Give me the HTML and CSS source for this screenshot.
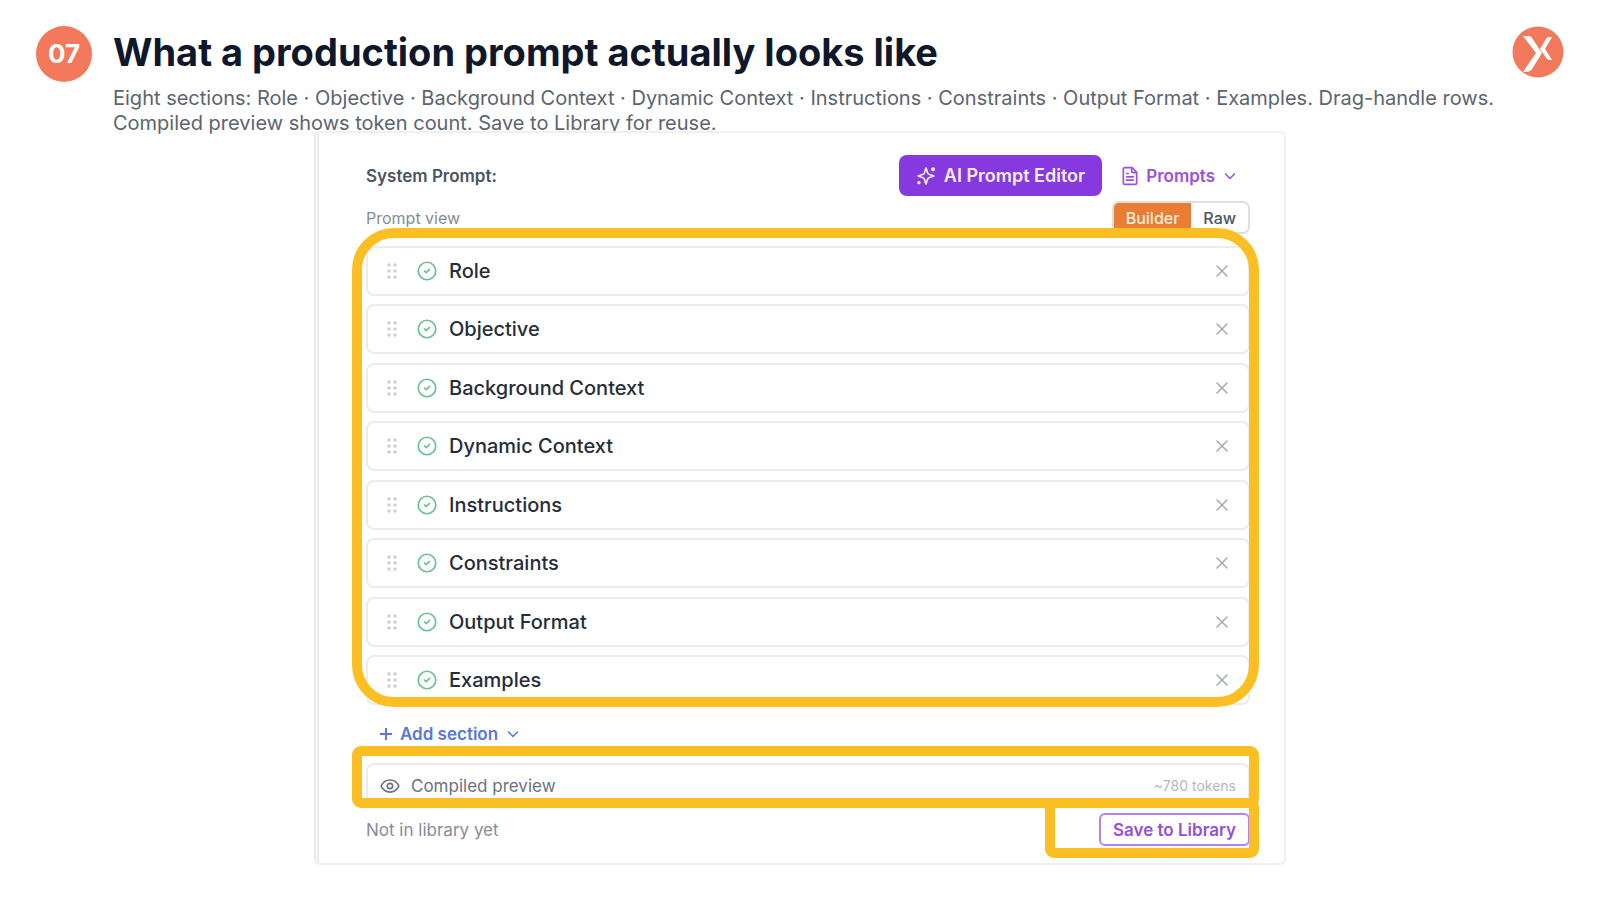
FILE: index.html
```
<!DOCTYPE html>
<html lang="en">
<head>
  <meta charset="UTF-8">
  <title>What a production prompt actually looks like</title>
  <link rel="stylesheet" href="styles.css">
</head>
<body>

<svg class="defs" width="0" height="0" aria-hidden="true">
  <symbol id="grip" viewBox="0 0 10 18">
    <g fill="currentColor">
      <circle cx="2" cy="3" r="1.8"/><circle cx="8" cy="3" r="1.8"/>
      <circle cx="2" cy="9" r="1.8"/><circle cx="8" cy="9" r="1.8"/>
      <circle cx="2" cy="15" r="1.8"/><circle cx="8" cy="15" r="1.8"/>
    </g>
  </symbol>
  <symbol id="check" viewBox="0 0 24 24">
    <circle cx="12" cy="12" r="10.5"/><path d="m9 12 2 2 4-4"/>
  </symbol>
  <symbol id="close" viewBox="0 0 12 12"><path d="M1 1l10 10M11 1L1 11"/></symbol>
  <symbol id="chevron" viewBox="0 0 12 12"><path d="M1.500 4l4.500 4.500L10.500 4"/></symbol>
</svg>

<header class="header">
  <span class="number">07</span>
  <div class="heading">
    <h1>What a production prompt actually looks like</h1>
    <p>Eight sections: Role · Objective · Background Context · Dynamic Context · Instructions · Constraints · Output Format · Examples. Drag-handle rows. Compiled preview shows token count. Save to Library for reuse.</p>
  </div>
  <svg class="logo" viewBox="0 0 52 52" aria-label="Logo">
    <circle cx="26" cy="26" r="25.500" fill="#f2795b"/>
    <path d="M11 10h5q3 0 4 2l10 15-10 16q-2 3-5 3h-4l13-19z" fill="#fff"/>
    <path d="M40 11h-3q-2 0-3 2l-6 10 7 10q1 1 3 1h2l-7-11z" fill="#fff"/>
  </svg>
</header>

<main class="panel">
  <div class="bar bar-top">
    <h2>System Prompt:</h2>
    <div class="actions">
      <button class="btn-editor">
        <svg class="icon" viewBox="0 0 24 24"><path d="M12 2.500l2 6q.4 1.100 1.500 1.500l6 2-6 2q-1.100.4-1.500 1.500l-2 6-2-6q-.4-1.100-1.500-1.500l-6-2 6-2q1.100-.4 1.500-1.500z"/><circle cx="20.500" cy="4" r="1.500"/><circle cx="3.500" cy="20" r="1"/></svg>
        AI Prompt Editor
      </button>
      <button class="btn-prompts">
        <svg class="icon" viewBox="0 0 24 24"><path d="M14.500 2H6a2 2 0 0 0-2 2v16a2 2 0 0 0 2 2h12a2 2 0 0 0 2-2V7.500zM14 2v4a2 2 0 0 0 2 2h4M10 9H8M16 13H8M16 17H8"/></svg>
        Prompts
        <svg class="chevron"><use href="#chevron"/></svg>
      </button>
    </div>
  </div>

  <div class="bar bar-view">
    <span>Prompt view</span>
    <div class="toggle">
      <button class="active">Builder</button>
      <button>Raw</button>
    </div>
  </div>

  <div class="marked marked-sections">
    <ul class="sections">
      <li><svg class="grip"><use href="#grip"/></svg><svg class="check"><use href="#check"/></svg>Role<button class="close" aria-label="Remove Role"><svg><use href="#close"/></svg></button></li>
      <li><svg class="grip"><use href="#grip"/></svg><svg class="check"><use href="#check"/></svg>Objective<button class="close" aria-label="Remove Objective"><svg><use href="#close"/></svg></button></li>
      <li><svg class="grip"><use href="#grip"/></svg><svg class="check"><use href="#check"/></svg>Background Context<button class="close" aria-label="Remove Background Context"><svg><use href="#close"/></svg></button></li>
      <li><svg class="grip"><use href="#grip"/></svg><svg class="check"><use href="#check"/></svg>Dynamic Context<button class="close" aria-label="Remove Dynamic Context"><svg><use href="#close"/></svg></button></li>
      <li><svg class="grip"><use href="#grip"/></svg><svg class="check"><use href="#check"/></svg>Instructions<button class="close" aria-label="Remove Instructions"><svg><use href="#close"/></svg></button></li>
      <li><svg class="grip"><use href="#grip"/></svg><svg class="check"><use href="#check"/></svg>Constraints<button class="close" aria-label="Remove Constraints"><svg><use href="#close"/></svg></button></li>
      <li><svg class="grip"><use href="#grip"/></svg><svg class="check"><use href="#check"/></svg>Output Format<button class="close" aria-label="Remove Output Format"><svg><use href="#close"/></svg></button></li>
      <li><svg class="grip"><use href="#grip"/></svg><svg class="check"><use href="#check"/></svg>Examples<button class="close" aria-label="Remove Examples"><svg><use href="#close"/></svg></button></li>
    </ul>
  </div>

  <button class="btn-add">
    <svg class="plus" viewBox="0 0 12 12"><path d="M6 0v12M0 6h12"/></svg>
    Add section
    <svg class="chevron"><use href="#chevron"/></svg>
  </button>

  <div class="marked marked-preview">
    <div class="preview">
      <svg class="icon" viewBox="0 0 24 24"><path d="M1.500 12.500a1 1 0 0 1 0-1C6 2.500 18 2.500 22.500 11.500a1 1 0 0 1 0 1C18 21.500 6 21.500 1.500 12.500z"/><circle cx="12" cy="12" r="3.200"/></svg>
      <span>Compiled preview</span>
      <small>~780 tokens</small>
    </div>
  </div>

  <div class="bar bar-library">
    <span>Not in library yet</span>
    <div class="marked marked-save">
      <button class="btn-save">Save to Library</button>
    </div>
  </div>
</main>

</body>
</html>
```
FILE: styles.css
```
* {
  box-sizing: border-box;
}
body {
  margin: 0;
  font-family: Inter, "Liberation Sans", sans-serif;
  background-color: #fff;
  color: #252d3a;
}
h1, h2, p, ul {
  margin: 0;
  padding: 0;
}
button {
  font: inherit;
  color: inherit;
  background: none;
  border: 0;
  padding: 0;
  display: flex;
  align-items: center;
}
svg {
  flex: none;
  fill: none;
  stroke: currentColor;
  stroke-width: 2;
  stroke-linecap: round;
  stroke-linejoin: round;
}
.defs {
  position: absolute;
}
.header {
  display: flex;
  align-items: flex-start;
  padding: 26px 36px 0;
}
.number {
  flex: none;
  width: 56px;
  height: 56px;
  border-radius: 50%;
  background-color: #f2795b;
  color: #fff;
  font-size: 26px;
  font-weight: 700;
  line-height: 56px;
  text-align: center;
}
.heading {
  flex: 1;
  margin-left: 21px;
}
h1 {
  font-size: 38px;
  line-height: 52px;
  font-weight: 700;
  color: #0f172a;
}
.heading p {
  margin-top: 8px;
  font-size: 20px;
  line-height: 25px;
  color: #5b6472;
}
.logo {
  width: 52px;
  height: 52px;
  stroke: none;
}
.panel {
  position: relative;
  margin: -5px 314px 0;
  padding: 22px 34px 17px 47px;
  background-color: #fff;
  border: 2px solid #f0f0f2;
  border-left: 5px double #e9eaec;
  border-radius: 6px;
}
.bar {
  display: flex;
  align-items: center;
  justify-content: space-between;
}
h2 {
  font-size: 17px;
  font-weight: 600;
  color: #4b5563;
}
.actions {
  display: flex;
  gap: 18px;
  padding-right: 14px;
  font-weight: 600;
}
.icon {
  width: 20px;
  height: 20px;
}
.btn-editor {
  height: 41px;
  padding: 0 17px;
  gap: 8px;
  border-radius: 8px;
  background-color: #8639df;
  font-size: 18px;
  color: #f5edff;
}
.btn-prompts {
  gap: 6px;
  font-size: 17px;
  color: #9a50e6;
}
.chevron {
  width: 12px;
  height: 12px;
  margin-left: 3px;
  stroke-width: 1.5;
}
.bar-view {
  margin-top: 5px;
  font-size: 16px;
  color: #868c98;
}
.toggle {
  display: flex;
  height: 33px;
  border: 2px solid #dcdee3;
  border-radius: 7px;
  overflow: hidden;
  font-weight: 500;
  color: #4b5563;
}
.toggle button {
  padding: 0 12px;
}
.toggle .active {
  background-color: #e87d33;
  color: #ffeede;
}
/* yellow callout frames drawn over the panel */
.marked {
  position: relative;
}
.marked::after {
  content: "";
  position: absolute;
  border: 10px solid #fbbf24;
  border-radius: 9px;
  pointer-events: none;
}
.marked-sections {
  margin-top: 12px;
}
.marked-sections::after {
  inset: -18px -9px -2px -14px;
  border-radius: 42px;
}
.sections {
  min-height: 459px;
  display: flex;
  flex-direction: column;
  justify-content: space-between;
  list-style: none;
}
.sections li {
  display: flex;
  align-items: center;
  height: 50px;
  padding: 0 20px 0 19px;
  border: 2px solid #ececef;
  border-radius: 8px;
  font-size: 20px;
  font-weight: 500;
}
.grip {
  width: 10px;
  height: 18px;
  color: #cdd0d5;
  stroke: none;
}
.check {
  width: 20px;
  height: 20px;
  margin: 0 12px 0 20px;
  color: #6cc092;
}
.close {
  margin-left: auto;
  color: #a4a9b2;
}
.close svg {
  width: 12px;
  height: 12px;
  stroke-width: 1.5;
}
.btn-add {
  margin: 16px 0 0 14px;
  height: 26px;
  gap: 8px;
  font-size: 17px;
  font-weight: 600;
  color: #5878dc;
}
.btn-add .chevron {
  margin-left: 1px;
}
.plus {
  width: 12px;
  height: 12px;
}
.marked-preview {
  margin-top: 16px;
}
.marked-preview::after {
  inset: -17px -9px -6px -14px;
}
.preview {
  display: flex;
  align-items: center;
  height: 39px;
  padding: 4px 12px 0;
  gap: 11px;
  border: 2px solid #ececef;
  border-bottom: 0;
  border-radius: 8px 8px 0 0;
  font-size: 17px;
  color: #6b7280;
}
.preview small {
  margin-left: auto;
  font-size: 14px;
  color: #b4b8c0;
}
.bar-library {
  margin-top: 11px;
  font-size: 17px;
  color: #868c98;
}
.marked-save::after {
  inset: -15px -9px -12px -54px;
}
.btn-save {
  height: 33px;
  padding: 0 12px;
  border: 2px solid #b583ee;
  border-radius: 6px;
  font-size: 17px;
  font-weight: 600;
  color: #9450de;
}
```
